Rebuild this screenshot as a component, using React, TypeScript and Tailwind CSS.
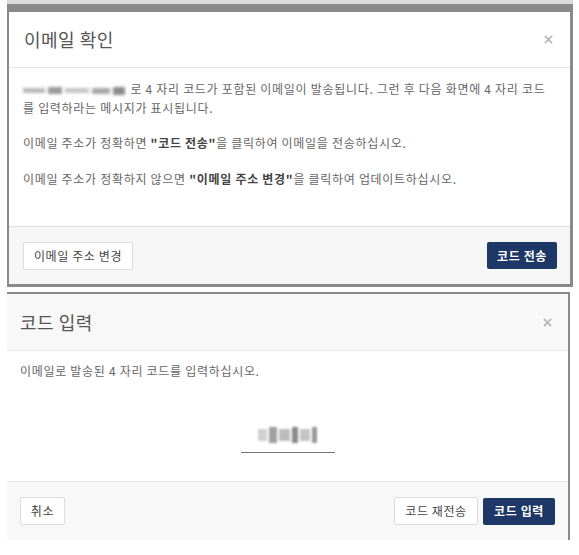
const font = { fontFamily: '"Noto Sans CJK KR", "Noto Sans", sans-serif' };

function Blur({ className }: { className: string }) {
  return (
    <span className={`inline-block align-middle blur-[1.5px] ${className}`}>
      <span className="flex h-full items-center gap-[3px]">
        <span className="h-[5px] w-[22px] bg-[#b8b8b8]" />
        <span className="h-[7px] w-[14px] bg-[#9a9a9a]" />
        <span className="h-[5px] w-[24px] bg-[#c4c4c4]" />
        <span className="h-[6px] w-[18px] bg-[#a8a8a8]" />
        <span className="h-[8px] w-[12px] bg-[#8c8c8c]" />
      </span>
    </span>
  );
}

function CodeBlur() {
  return (
    <span className="flex h-[18px] w-[60px] items-center gap-[2px] blur-[1.2px]">
      <span className="h-[12px] w-[10px] bg-[#d0d0d0]" />
      <span className="h-[16px] w-[8px] bg-[#a0a0a0]" />
      <span className="h-[12px] w-[12px] bg-[#bcbcbc]" />
      <span className="h-[16px] w-[6px] bg-[#8a8a8a]" />
      <span className="h-[12px] w-[10px] bg-[#c4c4c4]" />
      <span className="h-[16px] w-[6px] bg-[#999]" />
    </span>
  );
}

function CloseX() {
  return (
    <svg width="9" height="9" viewBox="0 0 10 10" className="text-[#b5b5b5]">
      <path d="M1 1L9 9M9 1L1 9" stroke="currentColor" strokeWidth="1.8" />
    </svg>
  );
}

export default function App() {
  return (
    <div className="h-[555px] w-[579px] bg-white text-[#666]" style={font}>
      {/* 이메일 확인 */}
      <div className="ml-[7px] w-[566px] border-t-4 border-[#dcdcdc]">
        <div className="border-t-[8px] border-l-2 border-r-[3px] border-b-[3px] border-[#8a8a8a]">
          <div className="flex h-[56px] items-center justify-between border-b border-[#e3e3e3] pl-[15px] pr-[17px]">
            <h2 className="text-[18px] tracking-[0.5px] text-[#555]">이메일 확인</h2>
            <CloseX />
          </div>
          <div className="h-[158px] px-[14px] pt-[12px] text-[12px] leading-[17px] tracking-[0.7px]">
            <p>
              <Blur className="h-[17px] w-[104px]" /> 로 4 자리 코드가 포함된 이메일이 발송됩니다. 그런 후 다음 화면에 4 자리 코드
              <br />를 입력하라는 메시지가 표시됩니다.
            </p>
            <p className="mt-[18px]">
              이메일 주소가 정확하면 <b className="font-bold text-[#444]">"코드 전송"</b>을 클릭하여 이메일을 전송하십시오.
            </p>
            <p className="mt-[19px]">
              이메일 주소가 정확하지 않으면 <b className="font-bold text-[#444]">"이메일 주소 변경"</b>을 클릭하여 업데이트하십시오.
            </p>
          </div>
          <div className="flex h-[58px] items-center justify-between border-t border-[#e0e0e0] bg-[#f6f6f6] pl-[14px] pr-[13px]">
            <button className="h-[28px] w-[110px] rounded-[2px] border border-[#dcdcdc] bg-white text-[12px] tracking-[0.6px] text-[#444]">
              이메일 주소 변경
            </button>
            <button className="h-[27px] w-[70px] rounded-[2px] bg-[#1d3866] text-[12px] font-semibold tracking-[0.6px] text-white">
              코드 전송
            </button>
          </div>
        </div>
      </div>

      {/* 코드 입력 */}
      <div className="ml-[7px] mt-[5px] w-[563px] border-t-2 border-r-2 border-[#8a8a8a]">
        <div className="flex h-[57px] items-center justify-between border-b border-[#e6e6e6] bg-[#f8f8f8] pl-[13px] pr-[16px]">
          <h2 className="text-[18px] tracking-[0.5px] text-[#555]">코드 입력</h2>
          <CloseX />
        </div>
        <div className="h-[130px] px-[13px] pt-[11px] text-[12px] leading-[17px] tracking-[0.7px]">
          <p>이메일로 발송된 4 자리 코드를 입력하십시오.</p>
          <div className="mt-[44px] flex justify-center">
            <div className="flex h-[30px] w-[94px] items-start justify-center border-b border-[#777] pt-[3px]">
              <CodeBlur />
            </div>
          </div>
        </div>
        <div className="flex h-[59px] items-center justify-between border-t border-[#e3e3e3] bg-[#f8f8f8] pl-[13px] pr-[13px]">
          <button className="h-[28px] w-[45px] rounded-[2px] border border-[#dcdcdc] bg-white text-[12px] tracking-[0.6px] text-[#444]">
            취소
          </button>
          <div className="flex items-center gap-[5px]">
            <button className="h-[28px] w-[84px] rounded-[2px] border border-[#dcdcdc] bg-white text-[12px] tracking-[0.6px] text-[#444]">
              코드 재전송
            </button>
            <button className="h-[27px] w-[72px] rounded-[2px] bg-[#1d3866] text-[12px] font-semibold tracking-[0.6px] text-white">
              코드 입력
            </button>
          </div>
        </div>
      </div>
    </div>
  );
}
